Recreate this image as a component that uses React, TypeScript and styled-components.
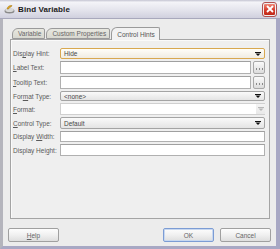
import styled, { createGlobalStyle } from 'styled-components';

const GlobalStyle = createGlobalStyle`
  html, body {
    margin: 0;
    padding: 0;
    width: 280px;
    height: 249px;
    overflow: hidden;
    background: #ececec;
  }
  * { box-sizing: border-box; }
`;

type Field = {
    label: React.ReactNode,
    kind: 'combo' | 'text' | 'browse' | 'disabled',
    value?: string,
    height: number,
    focused?: boolean,
}

const fields: Field[] = [
    { label: <>Dis<u>p</u>lay Hint:</>, kind: 'combo', value: 'Hide', height: 11, focused: true },
    { label: <><u>L</u>abel Text:</>, kind: 'browse', height: 13 },
    { label: <><u>T</u>ooltip Text:</>, kind: 'browse', height: 13 },
    { label: <>For<u>m</u>at Type:</>, kind: 'combo', value: '<none>', height: 10 },
    { label: <><u>F</u>ormat:</>, kind: 'disabled', height: 12 },
    { label: <><u>C</u>ontrol Type:</>, kind: 'combo', value: 'Default', height: 12 },
    { label: <>Display <u>W</u>idth:</>, kind: 'text', height: 11 },
    { label: <>Display Hei<u>g</u>ht:</>, kind: 'text', height: 12 },
];

const tabs = ['Variable', 'Custom Properties', 'Control Hints'];

function Arrow({ color = '#111' }: { color?: string }) {
    return (
        <svg width="6" height="4" viewBox="0 0 6 4">
            <rect x="0" y="0" width="6" height="1" fill={color} />
            <path d="M0.5 1.5 H5.5 L3 4 Z" fill={color} />
        </svg>
    );
}

function Dots() {
    return (
        <svg width="7" height="2" viewBox="0 0 7 2">
            <rect x="0" y="0" width="1" height="2" fill="#8a8a8a" />
            <rect x="3" y="0" width="1" height="2" fill="#8a8a8a" />
            <rect x="6" y="0" width="1" height="2" fill="#8a8a8a" />
        </svg>
    );
}

export default function App() {
  return (
    <Window>
        <GlobalStyle />
        <TitleBar>
            <svg width="11" height="10" viewBox="0 0 11 10">
                <ellipse cx="5.5" cy="7" rx="5" ry="2.5" fill="#8a8a8a" />
                <ellipse cx="5.5" cy="6" rx="4.2" ry="2" fill="#d8d8d8" />
                <path d="M3 5 Q4 1 8 1.5 L7 3 Q5 3 4.6 5 Z" fill="#e0a820" stroke="#a07010" strokeWidth="0.5" />
            </svg>
            <Title>Bind Variable</Title>
            <CloseButton>
                <svg width="8" height="8" viewBox="0 0 8 8">
                    <path d="M1 1 L7 7 M7 1 L1 7" stroke="#fff" strokeWidth="1.8" />
                </svg>
            </CloseButton>
        </TitleBar>
        <Frame>
            <TabArea>
                <TabRow>
                    {tabs.map((t, i) => (
                        <Tab key={t} $active={i === tabs.length - 1}>{t}</Tab>
                    ))}
                </TabRow>
                <Panel>
                    <Form>
                        {fields.map((f, i) => (
                            <Row key={i} $height={f.height}>
                                <Label>{f.label}</Label>
                                {f.kind === 'combo' && (
                                    <Combo $focused={f.focused}>
                                        <span>{f.value}</span>
                                        <Arrow />
                                    </Combo>
                                )}
                                {f.kind === 'browse' && (
                                    <Browse>
                                        <TextBox />
                                        <DotsButton><Dots /></DotsButton>
                                    </Browse>
                                )}
                                {f.kind === 'text' && <TextBox />}
                                {f.kind === 'disabled' && (
                                    <DisabledCombo>
                                        <div />
                                        <DisabledArrow><Arrow color="#b8b8b8" /></DisabledArrow>
                                    </DisabledCombo>
                                )}
                            </Row>
                        ))}
                    </Form>
                </Panel>
            </TabArea>
            <ButtonRow>
                <Button><u>H</u>elp</Button>
                <Spacer />
                <Button $default>OK</Button>
                <Button>Cancel</Button>
            </ButtonRow>
        </Frame>
    </Window>
  )
}

const Window = styled.div`
    width: 280px;
    height: 249px;
    display: flex;
    flex-direction: column;
    font-family: "Liberation Sans", Arial, sans-serif;
    font-size: 6.5px;
    color: #555;
    background: #ececec;
`;

const TitleBar = styled.div`
    height: 19px;
    display: flex;
    align-items: center;
    gap: 3px;
    padding: 0 4px 0 4px;
    background: linear-gradient(180deg, #c4c4d2 0%, #f4f4f8 12%, #e6e6ee 50%, #d0d0de 100%);
    border-bottom: 1px solid #a8a8bc;
`;

const Title = styled.span`
    font-size: 8px;
    font-weight: bold;
    color: #202020;
    letter-spacing: 0.1px;
`;

const CloseButton = styled.div`
    margin-left: auto;
    width: 13px;
    height: 13px;
    border: 1px solid #f0f0f0;
    outline: 1px solid #b05050;
    border-radius: 2px;
    background: linear-gradient(180deg, #f08878 0%, #d84030 50%, #c02818 100%);
    display: flex;
    align-items: center;
    justify-content: center;
`;

const Frame = styled.div`
    flex: 1;
    display: flex;
    flex-direction: column;
    border-left: 3px solid #b4b4bc;
    border-right: 4px solid #a8a8c4;
    border-bottom: 3px solid #a8a8c4;
    padding: 0 5px;
`;

const TabArea = styled.div`
    margin: 8px 1px 0 2px;
    display: flex;
    flex-direction: column;
`;

const TabRow = styled.div`
    display: flex;
    align-items: flex-end;
    gap: 1px;
    padding-left: 2px;
    height: 12px;
`;

const Tab = styled.div<{ $active?: boolean }>`
    height: ${p => p.$active ? 13 : 11}px;
    padding: 0 ${p => p.$active ? 4 : 3}px 0 5px;
    display: flex;
    align-items: center;
    border: 1px solid #9a9a9a;
    border-bottom: ${p => p.$active ? 'none' : '1px solid #9a9a9a'};
    border-radius: 6px 2px 0 0;
    background: ${p => p.$active ? '#f2f2f2' : 'linear-gradient(180deg, #e8e8e0 0%, #d8d8d0 100%)'};
    color: ${p => p.$active ? '#555' : '#666'};
    margin-bottom: ${p => p.$active ? -1 : 0}px;
    position: relative;
    z-index: ${p => p.$active ? 1 : 0};
`;

const Panel = styled.div`
    height: 180px;
    border: 1px solid #a4a4a4;
    background: #efefef;
    box-shadow: inset 1px 1px 0 #fafafa;
    padding: 8px 4px 0 2px;
`;

const Form = styled.div`
    display: flex;
    flex-direction: column;
    gap: 2px;
`;

const Row = styled.div<{ $height: number }>`
    height: ${p => p.$height}px;
    display: grid;
    grid-template-columns: 47px 1fr;
    align-items: center;
`;

const Label = styled.span`
    white-space: nowrap;
    color: #5a5a5a;
    u { text-decoration-thickness: 0.5px; }
`;

const Combo = styled.div<{ $focused?: boolean }>`
    height: 100%;
    display: flex;
    align-items: center;
    justify-content: space-between;
    padding: 0 3px 0 3px;
    border: 1px solid ${p => p.$focused ? '#d8a850' : '#a4a4a4'};
    border-radius: 2px;
    background: ${p => p.$focused
        ? 'linear-gradient(180deg, #fffef8 0%, #f0ece2 100%)'
        : 'linear-gradient(180deg, #fafafa 0%, #e4e4e4 100%)'};
    color: #484848;
`;

const Browse = styled.div`
    height: 100%;
    display: grid;
    grid-template-columns: 1fr 12px;
    gap: 2px;
`;

const TextBox = styled.div`
    height: 100%;
    background: #fff;
    border: 1px solid #b0b0b0;
    border-top-color: #a0a0a0;
`;

const DotsButton = styled.div`
    height: 100%;
    border: 1px solid #a8a8a8;
    border-radius: 2px;
    background: linear-gradient(180deg, #fafafa 0%, #dcdcdc 100%);
    display: flex;
    align-items: flex-end;
    justify-content: center;
    padding-bottom: 3px;
`;

const DisabledCombo = styled.div`
    height: 100%;
    display: grid;
    grid-template-columns: 1fr 9px;
    background: #fff;
    border: 1px solid #d0d0d0;
    border-right: none;
`;

const DisabledArrow = styled.div`
    background: linear-gradient(180deg, #f4f4f4 0%, #e8e8e8 100%);
    display: flex;
    align-items: center;
    justify-content: center;
`;

const ButtonRow = styled.div`
    display: flex;
    gap: 6px;
    margin-top: 9px;
`;

const Spacer = styled.div`
    flex: 1;
`;

const Button = styled.div<{ $default?: boolean }>`
    width: 51px;
    height: 14px;
    display: flex;
    align-items: center;
    justify-content: center;
    border: 1px solid ${p => p.$default ? '#7c9cd4' : '#a0a0a0'};
    border-radius: 2px;
    background: linear-gradient(180deg, #fdfdfd 0%, #f0f0f0 50%, #dedede 100%);
    box-shadow: ${p => p.$default ? 'inset 0 0 0 1px #c8d8f0' : 'none'};
    color: #666;
`;
